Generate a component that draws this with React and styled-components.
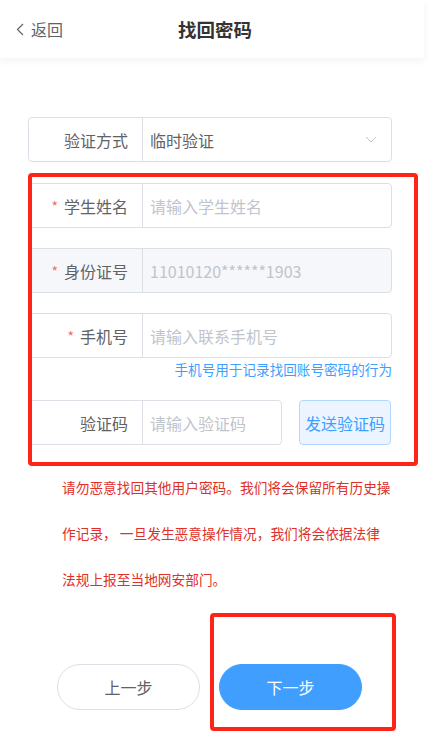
import React, { useState } from "react";
import styled, { createGlobalStyle } from "styled-components";

const GlobalStyle = createGlobalStyle`
  body {
    margin: 0;
    background: #fff;
    font-family: "Noto Sans CJK SC", "Noto Sans", sans-serif;
  }
  * { box-sizing: border-box; }
`;

const rows = [
  { key: "name", label: "学生姓名", required: true, placeholder: "请输入学生姓名" },
  { key: "idcard", label: "身份证号", required: true, placeholder: "11010120******1903", disabled: true },
  { key: "phone", label: "手机号", required: true, placeholder: "请输入联系手机号", hint: "手机号用于记录找回账号密码的行为" },
];

function App() {
  const [values, setValues] = useState({ name: "", phone: "", code: "" });

  const onChange = (evt) => {
    const { name, value } = evt.target;
    setValues({ ...values, [name]: value });
  };

  return (
    <Page>
      <GlobalStyle />
      <Header>
        <Back>
          <svg width="8" height="13" viewBox="0 0 8 13">
            <path d="M7 1 L1.5 6.5 L7 12" fill="none" stroke="#606266" strokeWidth="1.2" />
          </svg>
          返回
        </Back>
        <Title>找回密码</Title>
      </Header>

      <Form>
        <Row>
          <Label>验证方式</Label>
          <Field>
            <Value>临时验证</Value>
            <svg width="12" height="7" viewBox="0 0 12 7">
              <path d="M1 1 L6 6 L11 1" fill="none" stroke="#c0c4cc" strokeWidth="1" />
            </svg>
          </Field>
        </Row>

        <Group>
          {rows.map((r) => (
            <div key={r.key}>
              <Row disabled={r.disabled}>
                <Label>
                  {r.required && <Star>*</Star>}
                  {r.label}
                </Label>
                <Field>
                  <Input
                    name={r.key}
                    value={r.disabled ? "" : values[r.key]}
                    onChange={onChange}
                    placeholder={r.placeholder}
                    disabled={r.disabled}
                  />
                </Field>
              </Row>
              {r.hint && <Hint>{r.hint}</Hint>}
            </div>
          ))}

          <CodeLine>
            <Row narrow>
              <Label>验证码</Label>
              <Field>
                <Input name="code" value={values.code} onChange={onChange} placeholder="请输入验证码" />
              </Field>
            </Row>
            <SendButton>发送验证码</SendButton>
          </CodeLine>
          <Marker style={{ left: 0, top: -10, width: 390, height: 293 }} />
        </Group>

        <Warning>
          请勿恶意找回其他用户密码。我们将会保留所有历史操
          <br />
          作记录， 一旦发生恶意操作情况，我们将会依据法律
          <br />
          法规上报至当地网安部门。
        </Warning>
      </Form>

      <Footer>
        <StepButton>上一步</StepButton>
        <StepButton primary>下一步</StepButton>
        <Marker style={{ left: 210, top: -51, width: 186, height: 118 }} />
      </Footer>
    </Page>
  );
}

export default App;

const Page = styled.div`
  width: 424px;
  min-height: 733px;
  background: #fff;
`;

const Header = styled.div`
  height: 58px;
  display: flex;
  align-items: center;
  justify-content: center;
  position: relative;
  box-shadow: 0 3px 8px rgba(0, 0, 0, 0.05);
`;

const Back = styled.div`
  position: absolute;
  left: 16px;
  top: 0;
  height: 58px;
  display: flex;
  align-items: center;
  gap: 7px;
  font-size: 16px;
  color: #606266;
`;

const Title = styled.div`
  margin-left: 6px;
  font-size: 18.5px;
  font-weight: 700;
  color: #333;
`;

const Form = styled.div`
  padding: 59px 0 0 28px;
`;

const Group = styled.div`
  position: relative;
  margin-top: 21px;
  display: flex;
  flex-direction: column;
  gap: 20px;
`;

const Row = styled.div`
  width: ${(p) => (p.narrow ? "254px" : "364px")};
  height: 45px;
  display: flex;
  border: 1px solid #dcdfe6;
  border-radius: 4px;
  background: ${(p) => (p.disabled ? "#f5f7fa" : "#fff")};
  overflow: hidden;
`;

const Label = styled.div`
  width: 114px;
  flex-shrink: 0;
  display: flex;
  align-items: center;
  justify-content: flex-end;
  padding-right: 14px;
  border-right: 1px solid #dcdfe6;
  font-size: 16px;
  color: #606266;
`;

const Star = styled.span`
  color: #f56c6c;
  font-size: 14px;
  margin-right: 6px;
`;

const Field = styled.div`
  flex: 1;
  display: flex;
  align-items: center;
  padding: 0 14px 0 7px;
`;

const Value = styled.div`
  flex: 1;
  font-size: 16px;
  color: #606266;
`;

const Input = styled.input`
  flex: 1;
  width: 100%;
  border: none;
  outline: none;
  background: transparent;
  font-family: inherit;
  font-size: 16px;
  color: #606266;
  padding: 0;
  &::placeholder {
    color: #c0c4cc;
  }
`;

const Hint = styled.div`
  width: 364px;
  text-align: right;
  font-size: 13.6px;
  line-height: 22px;
  color: #409eff;
`;

const CodeLine = styled.div`
  display: flex;
  align-items: center;
  gap: 17px;
`;

const SendButton = styled.button`
  width: 92px;
  height: 45px;
  border: 1px solid #b3d8ff;
  border-radius: 4px;
  background: #ecf5ff;
  color: #409eff;
  font-family: inherit;
  font-size: 16px;
  padding: 0;
`;

const Marker = styled.div`
  position: absolute;
  border: 4px solid #ff2418;
  border-radius: 4px;
  pointer-events: none;
`;

const Warning = styled.div`
  margin: 19px 0 0 34px;
  font-size: 13.7px;
  line-height: 46px;
  color: #e0302a;
  white-space: nowrap;
`;

const Footer = styled.div`
  position: relative;
  margin-top: 62px;
  padding-left: 57px;
  display: flex;
  gap: 19px;
`;

const StepButton = styled.button`
  width: 143px;
  height: 46px;
  border-radius: 23px;
  border: 1px solid ${(p) => (p.primary ? "#409eff" : "#dcdfe6")};
  background: ${(p) => (p.primary ? "#409eff" : "#fff")};
  color: ${(p) => (p.primary ? "#fff" : "#606266")};
  font-family: inherit;
  font-size: 16px;
  padding: 0;
`;
